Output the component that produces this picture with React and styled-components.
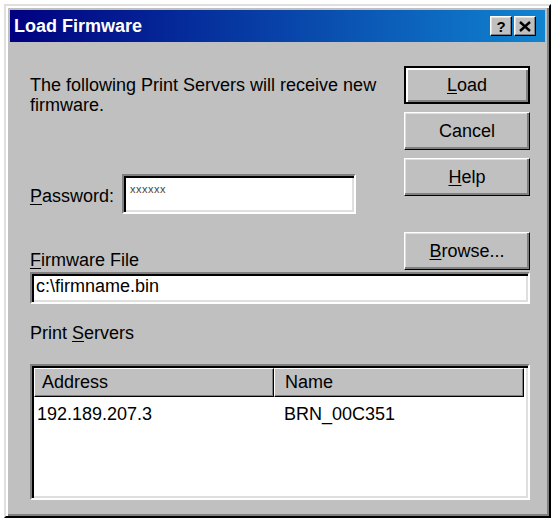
import React from 'react';
import styled, { createGlobalStyle } from 'styled-components';

const Global = createGlobalStyle`
  html, body { margin: 0; padding: 0; background: #fff; }
  body { font-family: "Liberation Sans", Arial, sans-serif; color: #000; }
  * { box-sizing: border-box; }
`;

const Page = styled.div`
  padding: 4px 0 0 4px;
`;

const Window = styled.div`
  width: 547px;
  background: #c0c0c0;
  border: 2px solid;
  border-color: #dfdfdf #000 #000 #dfdfdf;
  box-shadow: inset 2px 2px #fff, inset -2px -2px #808080;
  padding: 4px 4px 0 4px;
`;

const TitleBar = styled.div`
  height: 32px;
  display: flex;
  align-items: center;
  justify-content: space-between;
  background: linear-gradient(90deg, #000080 0%, #1084d0 100%);
  padding: 0 9px 0 4px;
`;

const TitleText = styled.span`
  color: #fff;
  font-weight: bold;
  font-size: 18px;
`;

const TitleButtons = styled.div`
  display: flex;
  gap: 2px;
`;

const TitleButton = styled.div`
  width: 22px;
  height: 20px;
  background: #c0c0c0;
  border: 1px solid;
  border-color: #fff #000 #000 #fff;
  box-shadow: inset -1px -1px #808080, inset 1px 1px #dfdfdf;
  display: flex;
  align-items: center;
  justify-content: center;
  font-weight: bold;
  font-size: 15px;
  line-height: 1;
`;

const Body = styled.div`
  padding: 24px 15px 16px 20px;
`;

const TopSection = styled.div`
  display: flex;
  justify-content: space-between;
`;

const LeftColumn = styled.div`
  display: flex;
  flex-direction: column;
  padding-top: 9px;
`;

const Message = styled.p`
  margin: 0;
  font-size: 18px;
  line-height: 20px;
`;

const PasswordRow = styled.div`
  display: flex;
  align-items: center;
  gap: 8px;
  margin-top: 59px;
`;

const Label = styled.span`
  font-size: 18px;
  line-height: 20px;
  padding-top: ${p => p.$offset || 0}px;
`;

const ButtonColumn = styled.div`
  display: flex;
  flex-direction: column;
  gap: 8px;
`;

const Button = styled.div`
  width: 126px;
  height: 38px;
  font-size: 18px;
  display: flex;
  align-items: center;
  justify-content: center;
  background: #c0c0c0;
  border: ${p => (p.$default ? '2px solid #000' : '1px solid')};
  border-color: ${p => (p.$default ? '#000' : '#fff #000 #000 #fff')};
  box-shadow: ${p =>
    p.$default
      ? 'inset 2px 2px #fff, inset -2px -2px #808080'
      : 'inset -2px -2px #808080, inset 1px 1px #dfdfdf'};
`;

const U = styled.span`
  text-decoration: underline;
  text-underline-offset: 2px;
  text-decoration-thickness: 1px;
`;

const Sunken = styled.div`
  background: #fff;
  border: 2px solid;
  border-color: #808080 #fff #fff #808080;
  box-shadow: inset 2px 2px #000, inset -2px -2px #dfdfdf;
`;

const PasswordBox = styled(Sunken)`
  width: 234px;
  height: 40px;
  padding: 7px 6px;
  font-size: 11px;
  color: #444;
  letter-spacing: 0.5px;
`;

const FileRow = styled.div`
  display: flex;
  justify-content: space-between;
  align-items: flex-end;
  margin-top: 18px;
`;

const FileBox = styled(Sunken)`
  margin-top: 2px;
  height: 32px;
  padding: 2px 4px;
  font-size: 18px;
  line-height: 20px;
`;

const SectionLabel = styled.div`
  margin-top: 19px;
  font-size: 18px;
  line-height: 20px;
`;

const ListBox = styled(Sunken)`
  margin-top: 21px;
  height: 136px;
  padding: 2px;
`;

const ListRow = styled.div`
  display: grid;
  grid-template-columns: 240px 250px;
`;

const HeaderCell = styled.div`
  height: 29px;
  background: #c0c0c0;
  border: 1px solid;
  border-color: #fff #000 #000 #fff;
  box-shadow: inset -1px -1px #808080;
  font-size: 18px;
  line-height: 27px;
  padding-left: ${p => p.$pad}px;
`;

const Cell = styled.div`
  font-size: 18px;
  line-height: 20px;
  padding: 7px 0 0 ${p => p.$pad}px;
`;

const CloseIcon = () => (
  <svg width="12" height="11" viewBox="0 0 12 11">
    <path d="M1 1 L11 10 M11 1 L1 10" stroke="#000" strokeWidth="2.4" />
  </svg>
);

export default function App() {
  return (
    <Page>
      <Global />
      <Window>
        <TitleBar>
          <TitleText>Load Firmware</TitleText>
          <TitleButtons>
            <TitleButton>?</TitleButton>
            <TitleButton>
              <CloseIcon />
            </TitleButton>
          </TitleButtons>
        </TitleBar>
        <Body>
          <TopSection>
            <LeftColumn>
              <Message>
                The following Print Servers will receive new
                <br />
                firmware.
              </Message>
              <PasswordRow>
                <Label $offset={4}>
                  <U>P</U>assword:
                </Label>
                <PasswordBox>xxxxxx</PasswordBox>
              </PasswordRow>
            </LeftColumn>
            <ButtonColumn>
              <Button $default>
                <U>L</U>oad
              </Button>
              <Button>Cancel</Button>
              <Button>
                <U>H</U>elp
              </Button>
            </ButtonColumn>
          </TopSection>
          <FileRow>
            <Label $offset={0}>
              <U>F</U>irmware File
            </Label>
            <Button>
              <U>B</U>rowse...
            </Button>
          </FileRow>
          <FileBox>c:\firmname.bin</FileBox>
          <SectionLabel>
            Print <U>S</U>ervers
          </SectionLabel>
          <ListBox>
            <ListRow>
              <HeaderCell $pad={7}>Address</HeaderCell>
              <HeaderCell $pad={10}>Name</HeaderCell>
            </ListRow>
            <ListRow>
              <Cell $pad={3}>192.189.207.3</Cell>
              <Cell $pad={10}>BRN_00C351</Cell>
            </ListRow>
          </ListBox>
        </Body>
      </Window>
    </Page>
  );
}
